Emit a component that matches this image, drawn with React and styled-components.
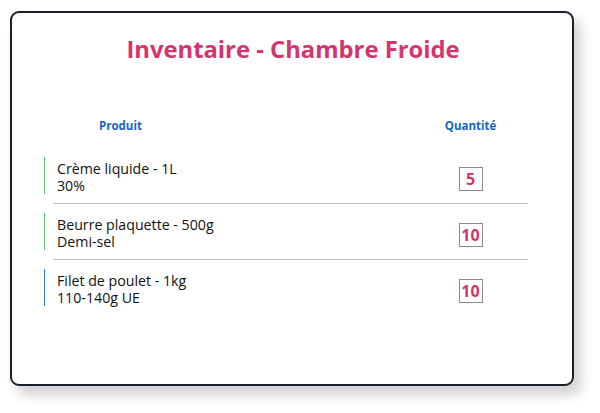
import * as React from "react";
import styled, { createGlobalStyle } from "styled-components";

const GlobalStyle = createGlobalStyle`
  body {
    margin: 0;
    background: #ffffff;
    font-family: "Open Sans", "Liberation Sans", sans-serif;
  }
`;

// layout
const Page = styled.div`
  width: 600px;
  height: 413px;
  box-sizing: border-box;
  padding: 11px 26px 27px 10px;
`;

const Card = styled.div`
  height: 100%;
  box-sizing: border-box;
  border: 2px solid #18202c;
  border-radius: 9px;
  background: #ffffff;
  box-shadow: 7px 9px 12px rgba(0, 0, 0, 0.18);
  padding: 20px 0 0 32px;
`;

const Title = styled.h1`
  margin: 0 0 53px -30px;
  font-size: 23.8px;
  line-height: 32px;
  font-weight: 700;
  color: #d6336f;
  text-align: center;
`;

const Table = styled.div`
  width: 484px;
  display: flex;
  flex-direction: column;
`;

const HeaderRow = styled.div`
  display: flex;
  margin-bottom: 15px;
`;

const HeaderCell = styled.div`
  font-size: 11.5px;
  line-height: 15px;
  font-weight: 700;
  color: #1565c0;
  ${(p) => (p.$qty ? "width: 115px; text-align: center;" : "flex: 1; padding-left: 55px;")}
`;

const Row = styled.div`
  display: flex;
  align-items: flex-start;
  padding: 9px 0;
`;

const Info = styled.div`
  flex: 1;
  display: flex;
  flex-direction: column;
  border-left: 1px solid ${(p) => p.$accent};
  padding: 3px 0 0 12px;
  font-size: 14.2px;
  line-height: 17px;
  color: #111111;
`;

const Line = styled.span`
  display: block;
  white-space: nowrap;
`;

const QtyCell = styled.div`
  width: 115px;
  display: flex;
  justify-content: center;
  padding-top: 10px;
`;

const QtyBox = styled.div`
  width: 22px;
  height: 22px;
  border: 1px solid #8a8a8a;
  display: flex;
  align-items: center;
  justify-content: center;
  font-size: 16px;
  font-weight: 700;
  color: #d6336f;
`;

const Divider = styled.div`
  height: 1px;
  margin-left: 9px;
  background: #c4c4c4;
`;

const items = [
  { name: "Crème liquide - 1L", detail: "30%", qty: 5, accent: "#5cc171" },
  { name: "Beurre plaquette - 500g", detail: "Demi-sel", qty: 10, accent: "#5cc171" },
  { name: "Filet de poulet - 1kg", detail: "110-140g UE", qty: 10, accent: "#2f7fd8" },
];

// markup
const App = () => {
  return (
    <Page>
      <GlobalStyle />
      <Card>
        <Title>Inventaire - Chambre Froide</Title>
        <Table>
          <HeaderRow>
            <HeaderCell>Produit</HeaderCell>
            <HeaderCell $qty>Quantité</HeaderCell>
          </HeaderRow>
          {items.map((item, i) => (
            <React.Fragment key={item.name}>
              {i > 0 && <Divider />}
              <Row>
                <Info $accent={item.accent}>
                  <Line>{item.name}</Line>
                  <Line>{item.detail}</Line>
                </Info>
                <QtyCell>
                  <QtyBox>{item.qty}</QtyBox>
                </QtyCell>
              </Row>
            </React.Fragment>
          ))}
        </Table>
      </Card>
    </Page>
  );
};

export default App;
